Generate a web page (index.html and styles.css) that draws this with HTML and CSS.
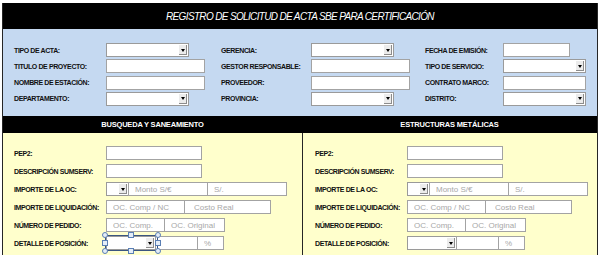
FILE: index.html
```html
<!DOCTYPE html>
<html lang="es">
<head>
  <meta charset="UTF-8">
  <title>Registro de Solicitud de Acta SBE</title>
  <link rel="stylesheet" href="styles.css">
</head>
<body>
  <div class="sheet">
    <!-- Title -->
    <div class="title">REGISTRO DE SOLICITUD DE ACTA SBE PARA CERTIFICACIÓN</div>

    <!-- General data -->
    <div class="general">
      <span class="label">TIPO DE ACTA:</span>
      <span class="cell"><span class="select w83"><span class="drop"></span></span></span>
      <span class="label">GERENCIA:</span>
      <span class="cell"><span class="select w83"><span class="drop"></span></span></span>
      <span class="label">FECHA DE EMISIÓN:</span>
      <span class="cell"><input class="box w67" type="text"></span>

      <span class="label">TITULO DE PROYECTO:</span>
      <span class="cell"><input class="box w99" type="text"></span>
      <span class="label">GESTOR RESPONSABLE:</span>
      <span class="cell"><input class="box w99" type="text"></span>
      <span class="label">TIPO DE SERVICIO:</span>
      <span class="cell"><span class="select w83"><span class="drop"></span></span></span>

      <span class="label">NOMBRE DE ESTACIÓN:</span>
      <span class="cell"><input class="box w99" type="text"></span>
      <span class="label">PROVEEDOR:</span>
      <span class="cell"><input class="box w99" type="text"></span>
      <span class="label">CONTRATO MARCO:</span>
      <span class="cell"><input class="box w83" type="text"></span>

      <span class="label">DEPARTAMENTO:</span>
      <span class="cell"><span class="select w83"><span class="drop"></span></span></span>
      <span class="label">PROVINCIA:</span>
      <span class="cell"><span class="select w83"><span class="drop"></span></span></span>
      <span class="label">DISTRITO:</span>
      <span class="cell"><span class="select w83"><span class="drop"></span></span></span>
    </div>

    <!-- Section headers -->
    <div class="band">
      <div>BUSQUEDA Y SANEAMIENTO</div>
      <div>ESTRUCTURAS METÁLICAS</div>
    </div>

    <!-- Panels -->
    <div class="panels">
      <div class="panel">
        <span class="label">PEP2:</span>
        <span class="cell"><input class="box w96" type="text"></span>
        <span class="label">DESCRIPCIÓN SUMSERV:</span>
        <span class="cell"><input class="box w96" type="text"></span>
        <span class="label">IMPORTE DE LA OC:</span>
        <span class="cell">
          <span class="select w23"><span class="drop"></span></span>
          <input class="box w80" type="text" placeholder="Monto S/€">
          <input class="box w80" type="text" placeholder="S/.">
        </span>
        <span class="label">IMPORTE DE LIQUIDACIÓN:</span>
        <span class="cell">
          <input class="box w79" type="text" placeholder="OC. Comp / NC">
          <input class="box w87 wide-pad" type="text" placeholder="Costo Real">
        </span>
        <span class="label">NÚMERO DE PEDIDO:</span>
        <span class="cell">
          <input class="box w59" type="text" placeholder="OC. Comp.">
          <input class="box w61" type="text" placeholder="OC. Original">
        </span>
        <span class="label">DETALLE DE POSICIÓN:</span>
        <span class="cell">
          <span class="selected">
            <span class="select w50"><span class="drop"></span></span>
            <span class="frame"></span>
            <span class="handle round tl"></span>
            <span class="handle round tr"></span>
            <span class="handle round bl"></span>
            <span class="handle round br"></span>
            <span class="handle square tm"></span>
            <span class="handle square bm"></span>
            <span class="handle square ml"></span>
            <span class="handle square mr"></span>
          </span>
          <input class="box w43" type="text">
          <input class="box w27" type="text" placeholder="%">
        </span>
      </div>

      <div class="panel right">
        <span class="label">PEP2:</span>
        <span class="cell"><input class="box w96" type="text"></span>
        <span class="label">DESCRIPCIÓN SUMSERV:</span>
        <span class="cell"><input class="box w96" type="text"></span>
        <span class="label">IMPORTE DE LA OC:</span>
        <span class="cell">
          <span class="select w23"><span class="drop"></span></span>
          <input class="box w80" type="text" placeholder="Monto S/€">
          <input class="box w80" type="text" placeholder="S/.">
        </span>
        <span class="label">IMPORTE DE LIQUIDACIÓN:</span>
        <span class="cell">
          <input class="box w79" type="text" placeholder="OC. Comp / NC">
          <input class="box w87 wide-pad" type="text" placeholder="Costo Real">
        </span>
        <span class="label">NÚMERO DE PEDIDO:</span>
        <span class="cell">
          <input class="box w59" type="text" placeholder="OC. Comp.">
          <input class="box w61" type="text" placeholder="OC. Original">
        </span>
        <span class="label">DETALLE DE POSICIÓN:</span>
        <span class="cell">
          <span class="select w50"><span class="drop"></span></span>
          <input class="box w43" type="text">
          <input class="box w27" type="text" placeholder="%">
        </span>
      </div>
    </div>
  </div>
</body>
</html>
```

FILE: styles.css
```css
* {
  margin: 0;
  padding: 0;
  box-sizing: border-box;
}

body {
  font-family: 'Liberation Sans', Arial, sans-serif;
  background: #fff;
  color: #1a1a1a;
  overflow: hidden;
}

.sheet {
  margin: 3px 2px 0;
  border-left: 1px solid #262626;
  border-right: 1px solid #262626;
}

/* Title */
.title {
  height: 26px;
  background: #000;
  color: #fff;
  font-style: italic;
  font-size: 10px;
  letter-spacing: -0.65px;
  display: flex;
  align-items: center;
  justify-content: center;
  padding-top: 1px;
}

/* General data */
.general {
  background: #c5d9f1;
  height: 87px;
  padding: 14px 0 0 11px;
  display: grid;
  grid-template-columns: 92px 115px 90px 114px 78px 1fr;
  grid-auto-rows: 14px;
  row-gap: 2.3px;
}

.label {
  font-size: 7px;
  font-weight: bold;
  letter-spacing: -0.4px;
  display: flex;
  align-items: center;
  white-space: nowrap;
  color: #111;
}

.cell {
  display: flex;
  align-items: stretch;
}

/* Fields */
.box {
  height: 14px;
  border: 1px solid #a3a3a3;
  background: #fff;
  font-family: 'Liberation Sans', Arial, sans-serif;
  font-size: 8px;
  padding: 0 6px;
  outline: none;
}

.box + .box,
.select + .box,
.selected + .box {
  margin-left: -1px;
}

.box::placeholder {
  color: #a8a8a8;
}

.wide-pad {
  padding-left: 9px;
}

.select {
  height: 14px;
  border: 1px solid #9a9a9a;
  background: #fff;
  display: flex;
  justify-content: flex-end;
  align-items: center;
  padding-right: 1px;
}

.drop {
  width: 8px;
  height: 10px;
  background: #ececec;
  border-right: 1px solid #8c8c8c;
  border-bottom: 1px solid #8c8c8c;
  display: flex;
  align-items: center;
  justify-content: center;
}

.drop::after {
  content: '';
  margin-top: 1px;
  border-left: 2.5px solid transparent;
  border-right: 2.5px solid transparent;
  border-top: 3px solid #000;
}

.w23 { width: 23px; }
.w27 { width: 27px; }
.w43 { width: 43px; }
.w50 { width: 50px; }
.w59 { width: 59px; }
.w61 { width: 61px; }
.w67 { width: 67px; }
.w79 { width: 79px; }
.w80 { width: 80px; }
.w83 { width: 83px; }
.w87 { width: 87px; }
.w96 { width: 96px; }
.w99 { width: 99px; }

/* Section headers */
.band {
  height: 17px;
  background: #000;
  color: #fff;
  font-size: 7.5px;
  font-weight: bold;
  letter-spacing: -0.2px;
  display: grid;
  grid-template-columns: 299px 1fr;
}

.band div {
  display: flex;
  align-items: center;
  justify-content: center;
}

/* Panels */
.panels {
  display: grid;
  grid-template-columns: 299px 1fr;
  height: 130px;
}

.panel {
  background: #ffffcc;
  padding: 13px 0 0 11px;
  display: grid;
  grid-template-columns: 92px 1fr;
  grid-auto-rows: 14px;
  row-gap: 4px;
  align-content: start;
}

.panel.right {
  border-left: 1px solid #262626;
  padding-left: 12px;
}

/* Selection handles */
.selected {
  position: relative;
  display: flex;
}

.frame {
  position: absolute;
  inset: -1px -2px -1px -1px;
  border: 1px solid #3b5580;
}

.handle {
  position: absolute;
  width: 6px;
  height: 6px;
  border: 1px solid #5a7fb4;
  background: #e4edf8;
}

.round { border-radius: 50%; }

.tl { left: -4px; top: -4px; }
.tr { right: -5px; top: -4px; }
.bl { left: -4px; bottom: -4px; }
.br { right: -5px; bottom: -4px; }
.tm { left: 22px; top: -4px; }
.bm { left: 22px; bottom: -4px; }
.ml { left: -4px; top: 4px; }
.mr { right: -5px; top: 4px; }
```
